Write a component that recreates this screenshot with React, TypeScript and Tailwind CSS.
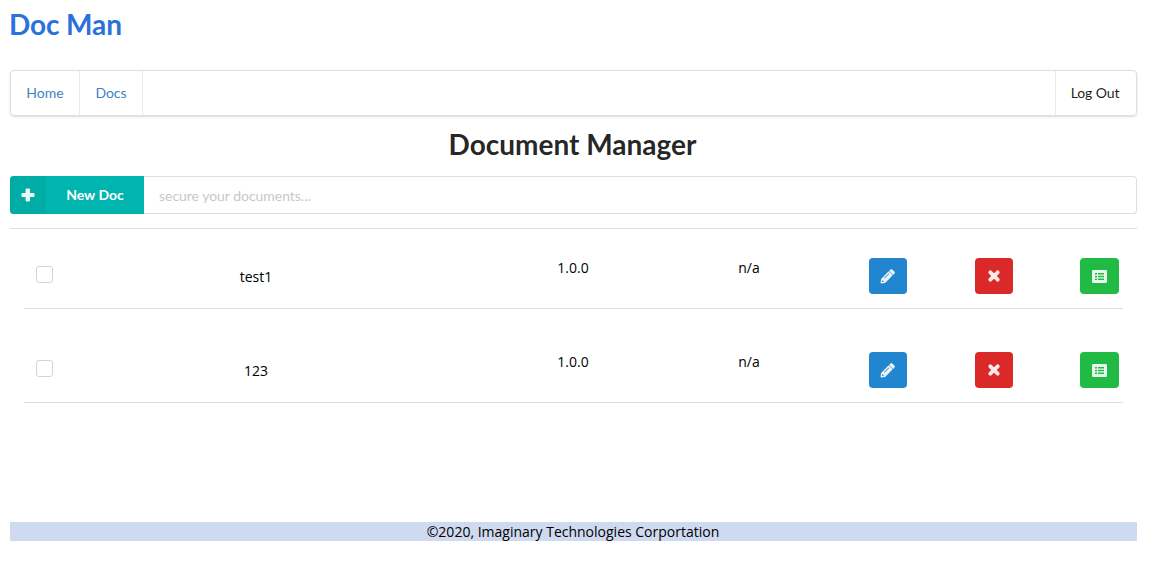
type IconProps = { className?: string };

function PlusIcon() {
  return (
    <svg viewBox="0 0 14 14" className="h-[14px] w-[14px]" fill="white" fillOpacity="0.9">
      <path d="M5.500.6h2.600q.9 0 .9.9v3.500h3.600q.9 0 .9.900v2.200q0 .9-.9.900H9v3.500q0 .9-.9.900H5.500q-.9 0-.9-.9V9H1.400q-.9 0-.9-.9V5.900q0-.9.9-.9h3.200V1.500q0-.9.9-.9z" />
    </svg>
  );
}
function PencilIcon({ className }: IconProps) {
  return (
    <svg viewBox="0 0 16 16" className={className} fill="currentColor">
      <path d="M10.500 1.500q.9-.9 1.800 0l2.200 2.200q.9.900 0 1.800l-1.400 1.400-4-4z" />
      <path fillRule="evenodd" d="M8.700 3.300l4 4-7.600 7.600-3.900.5q-.7.100-.6-.6l.5-3.900zM8.700 5.500L4.100 10.100l.5.500 4.600-4.600zM2.300 12.200l-.2 1.700 1.700-.2v-.8h-.7v-.7z" />
    </svg>
  );
}
function CrossIcon({ className }: IconProps) {
  return (
    <svg viewBox="0 0 14 14" className={className} fill="none" stroke="currentColor">
      <path d="M3.300 3.300l7.400 7.400M10.700 3.300l-7.400 7.400" strokeWidth="3.900" strokeLinecap="round" />
    </svg>
  );
}
function ListIcon({ className }: IconProps) {
  return (
    <svg viewBox="0 0 15 13" className={className} fill="none">
      <rect width="15" height="13" rx="1.3" fill="currentColor" />
      <path d="M3 3.800h2M3 6.500h2M3 9.200h2M6 3.800h6M6 6.500h6M6 9.200h6" stroke="#21ba45" strokeWidth="1.400" />
    </svg>
  );
}

const docs = [
  { name: "test1", version: "1.0.0", note: "n/a" },
  { name: "123", version: "1.0.0", note: "n/a" },
];

export default function App() {
  return (
    <div className="h-[577px] bg-white px-[10px] font-['Open_Sans',sans-serif] text-[14px] leading-[19px] text-black">
      <h1 className="-ml-px flex h-[70px] items-start pt-[6px] font-['Lato',sans-serif] text-[28px] leading-[36px] font-bold tracking-[-0.1px] text-[#2a71dc]">Doc Man</h1>
      <nav className="flex h-[46px] w-[1127px] rounded border border-[#dededf] font-['Lato',sans-serif] text-[14px] text-[#4183c4] shadow-[0_1px_2px_0_rgba(34,36,38,0.15)]">
        <a className="flex w-[69px] items-center justify-center border-r border-[#e9e9e9] pb-[2px]">Home</a>
        <a className="flex w-[63px] items-center justify-center border-r border-[#e9e9e9] pb-[2px]">Docs</a>
        <a className="ml-auto flex w-[81px] items-center justify-center border-l border-[#e9e9e9] pr-[2px] pb-[2px] tracking-[-0.1px] text-black/90">Log Out</a>
      </nav>
      <h2 className="mt-[10px] w-[1127px] pr-[2px] text-center font-['Lato',sans-serif] text-[28px] leading-[36px] font-bold text-black/87">Document Manager</h2>
      <div className="mt-[14px] flex h-[38px] w-[1127px] font-['Lato',sans-serif]">
        <button className="flex w-[134px] items-center rounded-l bg-[#00b5ad] font-bold text-white">
          <span className="flex h-full w-9 items-center justify-center rounded-l bg-[#00aca4] pr-px"><PlusIcon /></span>
          <span className="flex-1 pb-[2px] text-center">New Doc</span>
        </button>
        <input placeholder="secure your documents..." className="flex-1 rounded-r border border-l-0 border-[#dededf] px-[15px] tracking-[-0.03px] placeholder:text-[#c7c7c7]" />
      </div>
      <div className="mt-[14px] h-[294px] w-[1127px] border-t border-[#dededf] px-[14px]">
        {docs.map((d, i) => (
          <div key={d.name} className={`flex w-[1099px] border-b border-[#dededf] ${i ? "h-[94px] pt-[43px]" : "h-[80px] pt-[29px]"}`}>
            <div className="w-[100px] pt-2 pl-3"><span className="block h-[17px] w-[17px] rounded-[3px] border border-[#d4d4d5]" /></div>
            <div className="w-[264px] pt-[9px] text-center">{d.name}</div>
            <div className="ml-[97px] w-[176px] text-center">{d.version}</div>
            <div className="w-[176px] text-center">{d.note}</div>
            <button className="ml-8 flex h-9 w-[38px] items-center justify-center rounded bg-[#2185d0] text-white/90"><PencilIcon className="h-4 w-4" /></button>
            <button className="ml-[68px] flex h-9 w-[38px] items-center justify-center rounded bg-[#db2828] text-white/90"><CrossIcon className="h-[14px] w-[14px]" /></button>
            <button className="ml-[67px] flex h-9 w-[39px] items-center justify-center rounded bg-[#21ba45] text-white/90"><ListIcon className="h-[13px] w-[15px]" /></button>
          </div>
        ))}
      </div>
      <footer className="h-[19px] w-[1127px] bg-[#cfd9ef] pr-px text-center">©2020, Imaginary Technologies Corportation</footer>
    </div>
  );
}
